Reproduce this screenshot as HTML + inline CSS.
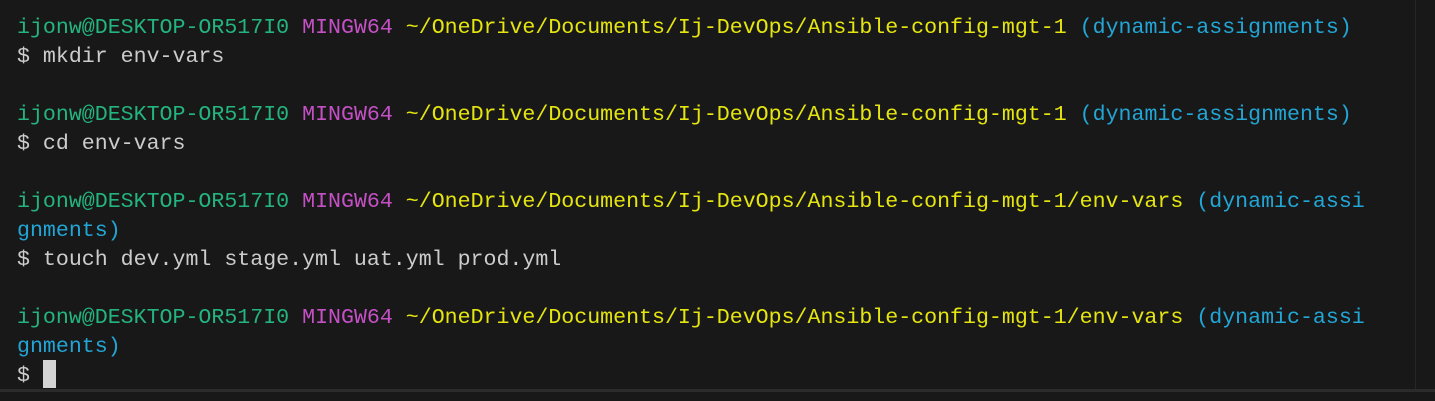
<!DOCTYPE html>
<html><head><meta charset="utf-8"><style>
html,body{margin:0;padding:0;background:#181818;width:1435px;height:401px;overflow:hidden}
.t{position:absolute;left:17px;top:14px;font-family:"Liberation Mono","DejaVu Sans Mono",monospace;font-size:21.6px;line-height:29px;color:#cccccc;white-space:pre}
.g{color:#23b47f}.m{color:#c650c6}.y{color:#e5e510}.b{color:#22a6d6}
.cur{display:inline-block;width:13px;height:28px;background:#d4d4d4;vertical-align:top;margin-top:-2px}
.vl{position:absolute;left:1415px;top:0;width:1px;height:390px;background:#262626}
.bb{position:absolute;left:0;top:389px;width:1435px;height:3px;background:#2b2b2b}
</style></head><body>
<div class="vl"></div>
<div class="t"><span class="g">ijonw@DESKTOP-OR517I0</span> <span class="m">MINGW64</span> <span class="y">~/OneDrive/Documents/Ij-DevOps/Ansible-config-mgt-1</span> <span class="b">(dynamic-assignments)</span>
$ mkdir env-vars

<span class="g">ijonw@DESKTOP-OR517I0</span> <span class="m">MINGW64</span> <span class="y">~/OneDrive/Documents/Ij-DevOps/Ansible-config-mgt-1</span> <span class="b">(dynamic-assignments)</span>
$ cd env-vars

<span class="g">ijonw@DESKTOP-OR517I0</span> <span class="m">MINGW64</span> <span class="y">~/OneDrive/Documents/Ij-DevOps/Ansible-config-mgt-1/env-vars</span> <span class="b">(dynamic-assi
gnments)</span>
$ touch dev.yml stage.yml uat.yml prod.yml

<span class="g">ijonw@DESKTOP-OR517I0</span> <span class="m">MINGW64</span> <span class="y">~/OneDrive/Documents/Ij-DevOps/Ansible-config-mgt-1/env-vars</span> <span class="b">(dynamic-assi
gnments)</span>
$ <span class="cur"></span></div>
<div class="bb"></div>
</body></html>
